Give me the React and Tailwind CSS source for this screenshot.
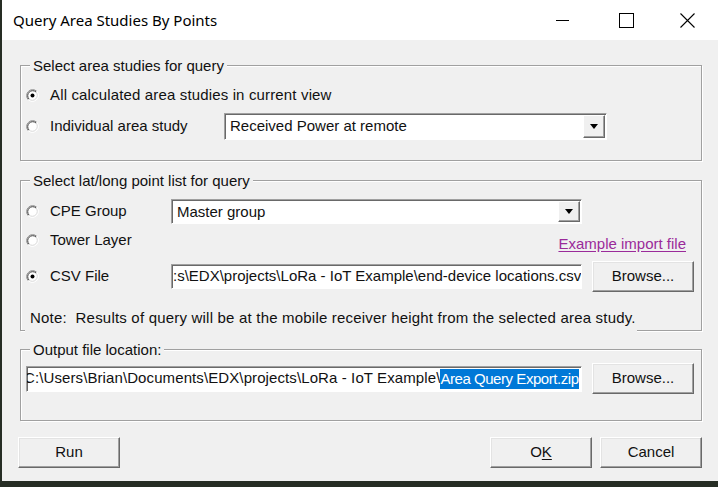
import React from "react";

function Radio({ checked }) {
  return (
    <svg width="13" height="13" viewBox="0 0 13 13" className="shrink-0">
      <circle cx="6.5" cy="6.5" r="6" fill="#fff" />
      <path d="M2.26 10.74 A6 6 0 0 1 10.74 2.26" fill="none" stroke="#8a8a8a" strokeWidth="1" />
      <path d="M10.74 2.26 A6 6 0 0 1 2.26 10.74" fill="none" stroke="#ffffff" strokeWidth="1" />
      <path d="M2.97 10.03 A5 5 0 0 1 10.03 2.97" fill="none" stroke="#404040" strokeWidth="1" />
      <path d="M10.03 2.97 A5 5 0 0 1 2.97 10.03" fill="none" stroke="#d8d8d8" strokeWidth="1" />
      {checked && <circle cx="6.5" cy="6.5" r="2" fill="#000" />}
    </svg>
  );
}

function Group({ title, className, children }) {
  return (
    <div className={"relative border border-[#a0a0a0] shadow-[1px_1px_0_#fff,inset_1px_1px_0_#fff] " + className}>
      <span className="absolute left-[9px] top-[-9px] px-[3px] bg-[#f0f0f0] leading-[18px]">{title}</span>
      {children}
    </div>
  );
}

function Combo({ text, className }) {
  return (
    <div className={"flex p-[1px] bg-white border border-t-[#a0a0a0] border-l-[#a0a0a0] border-r-white border-b-white shadow-[inset_1px_1px_0_#696969] " + className}>
      <span className="flex-1 pl-[4px] leading-[21px] whitespace-nowrap overflow-hidden">{text}</span>
      <div className="w-[22px] flex items-center justify-center bg-[#f0f0f0] border border-t-white border-l-white border-r-[#696969] border-b-[#696969] shadow-[inset_-1px_-1px_0_#a0a0a0]">
        <svg width="8" height="5" viewBox="0 0 8 5">
          <path d="M0 0 H8 L4 5 Z" fill="#000" />
        </svg>
      </div>
    </div>
  );
}

function Button({ children, className }) {
  return (
    <div className={"flex items-center justify-center w-[102px] h-[31px] bg-[#f0f0f0] border border-t-white border-l-white border-r-[#696969] border-b-[#696969] shadow-[inset_-1px_-1px_0_#a0a0a0,inset_1px_1px_0_#e3e3e3] " + className}>
      {children}
    </div>
  );
}

const inputCls =
  "bg-white border border-t-[#a0a0a0] border-l-[#a0a0a0] border-r-white border-b-white shadow-[inset_1px_1px_0_#696969] overflow-hidden whitespace-nowrap flex items-center";

export default function App() {
  return (
    <div className="w-[718px] h-[487px] bg-[#262d24] pl-[2px] overflow-hidden">
      <div className="h-[481px] flex flex-col font-['Liberation_Sans',Arial,sans-serif] text-[15px] text-[#111]">
        {/* title bar */}
        <div className="h-[40px] bg-white flex items-center">
          <span className="pl-[11px] font-['Noto_Sans',sans-serif] text-[15px] text-black">Query Area Studies By Points</span>
          <div className="ml-auto flex h-full">
            <div className="w-[61px] h-full flex items-center justify-start pl-[21px]">
              <svg width="14" height="14" viewBox="0 0 14 14">
                <path d="M0 7.5 H13" stroke="#000" strokeWidth="1" />
              </svg>
            </div>
            <div className="w-[61px] h-full flex items-center justify-center">
              <svg width="15" height="15" viewBox="0 0 15 15">
                <rect x="0.5" y="0.5" width="14" height="14" fill="none" stroke="#000" strokeWidth="1" />
              </svg>
            </div>
            <div className="w-[61px] h-full flex items-center justify-center">
              <svg width="15" height="15" viewBox="0 0 15 15">
                <path d="M0.5 0.5 L14.5 14.5 M14.5 0.5 L0.5 14.5" stroke="#000" strokeWidth="1.1" />
              </svg>
            </div>
          </div>
        </div>

        {/* body */}
        <div className="flex-1 bg-[#f0f0f0] pl-[16px] pt-[25px]">
          <Group title="Select area studies for query" className="ml-[2px] w-[682px] h-[96px] pt-[17px] pl-[5px]">
            <div className="h-[24px] flex items-center gap-[11px]">
              <Radio checked />
              <span className="tracking-[0.15px]">All calculated area studies in current view</span>
            </div>
            <div className="mt-[6px] h-[27px] flex items-center">
              <div className="w-[198px] flex items-center gap-[11px]">
                <Radio />
                <span>Individual area study</span>
              </div>
              <Combo text="Received Power at remote" className="w-[383px] h-[27px]" />
            </div>
          </Group>

          <Group title="Select lat/long point list for query" className="ml-[2px] mt-[19px] w-[682px] h-[151px] pt-[18px] pl-[5px]">
            <div className="h-[25px] flex items-center">
              <div className="w-[145px] flex items-center gap-[11px]">
                <Radio />
                <span>CPE Group</span>
              </div>
              <Combo text="Master group" className="w-[411px] h-[25px]" />
            </div>
            <div className="mt-[4px] h-[24px] flex items-center pr-[15px]">
              <div className="w-[145px] flex items-center gap-[11px]">
                <Radio />
                <span>Tower Layer</span>
              </div>
              <span className="ml-auto pt-[8px] text-[#9a2a9a] underline underline-offset-[2px]">Example import file</span>
            </div>
            <div className="mt-[9px] h-[31px] flex items-center">
              <div className="w-[145px] flex items-center gap-[11px]">
                <Radio checked />
                <span>CSV File</span>
              </div>
              <div className={inputCls + " w-[411px] h-[25px] pl-[1px]"}>
                :s\EDX\projects\LoRa - IoT Example\end-device locations.csv
              </div>
              <Button className="ml-[10px]">Browse...</Button>
            </div>
            <span className="absolute left-[4px] top-[128px] w-[612px] h-[25px] pl-[5px] bg-[#f0f0f0] leading-[17px] whitespace-pre tracking-[0.2px]">
              {"Note:  Results of query will be at the mobile receiver height from the selected area study."}
            </span>
          </Group>

          <Group title="Output file location:" className="ml-[2px] mt-[18px] w-[682px] h-[72px] pt-[13px] pl-[5px]">
            <div className="h-[31px] flex items-center">
              <div className={inputCls + " w-[556px] h-[26px]"}>
                <span className="ml-[-3px] tracking-[0.1px]">C:\Users\Brian\Documents\EDX\projects\LoRa - IoT Example\</span>
                <span className="bg-[#0078d7] text-white leading-[20px] tracking-[-0.45px]">Area Query Export.zip</span>
              </div>
              <Button className="ml-[10px]">Browse...</Button>
            </div>
          </Group>

          <div className="mt-[16px] w-[684px] flex">
            <Button>Run</Button>
            <Button className="ml-auto">
              <span>
                O<span className="underline underline-offset-[2px]">K</span>
              </span>
            </Button>
            <Button className="ml-[8px]">Cancel</Button>
          </div>
        </div>
      </div>
    </div>
  );
}
